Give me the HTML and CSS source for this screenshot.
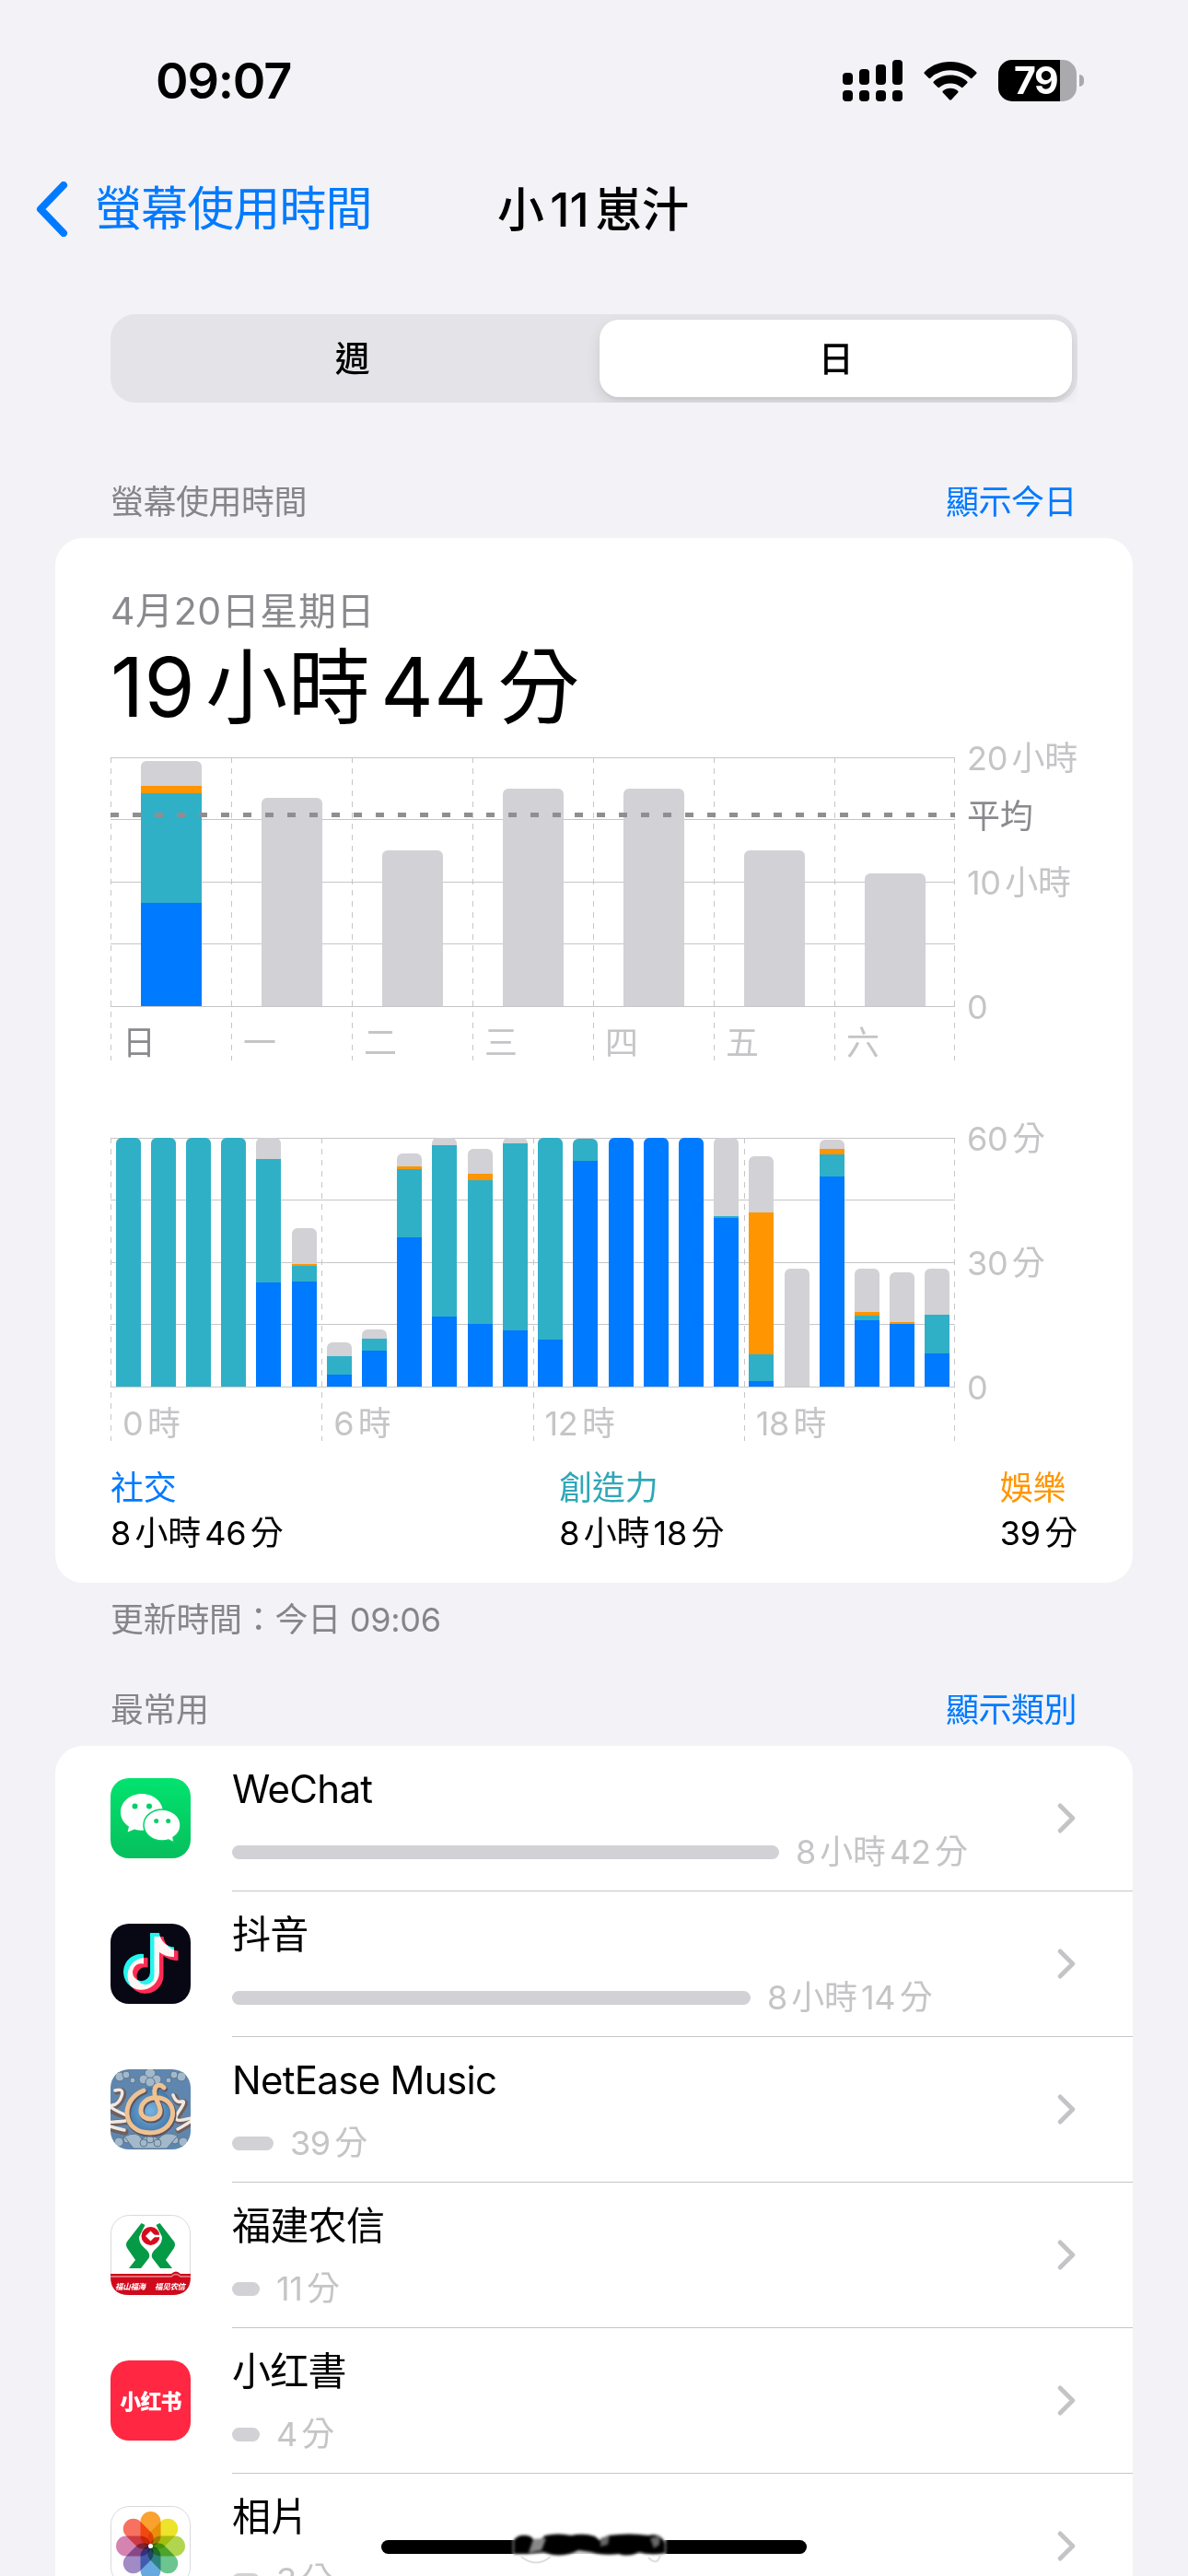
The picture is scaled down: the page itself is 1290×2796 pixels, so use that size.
FILE: index.html
```html
<!DOCTYPE html>
<html lang="zh-Hant">
<head>
    <meta charset="UTF-8">
    <meta name="viewport" content="width=device-width, initial-scale=1.0">
    <title>螢幕使用時間</title>
    <link rel="stylesheet" href="styles.css">
</head>
<body>
    <header class="status-bar">
        <span class="clock">09:07</span>
        <div class="status-icons">
            <svg class="signal" width="66" height="46" viewBox="0 0 66 46">
                <rect x="0" y="14" width="11" height="13" rx="4"/>
                <rect x="18" y="10" width="11" height="17" rx="4"/>
                <rect x="36" y="5" width="11" height="22" rx="4"/>
                <rect x="54" y="0" width="11" height="27" rx="4"/>
                <rect x="0" y="33" width="11" height="12" rx="4"/>
                <rect x="18" y="33" width="11" height="12" rx="4"/>
                <rect x="36" y="33" width="11" height="12" rx="4"/>
                <rect x="54" y="33" width="11" height="12" rx="4"/>
            </svg>
            <svg class="wifi" width="58" height="44" viewBox="0 0 58 44">
                <path d="M29 1C18 1 8 5 .8 12.200Q0 13 .8 14L5.500 18.800Q6.400 19.600 7.300 18.700C13 13.300 20.600 10.200 29 10.200S45 13.300 50.700 18.700Q51.600 19.600 52.500 18.800L57.200 14Q58 13 57.200 12.200C50 5 40 1 29 1Z"/>
                <path d="M29 15.500C22 15.500 15.600 18 10.800 22.400Q10 23.300 10.800 24.200L15.400 28.800Q16.300 29.600 17.200 28.800C20.400 26 24.500 24.500 29 24.500S37.600 26 40.800 28.800Q41.700 29.600 42.600 28.800L47.200 24.200Q48 23.300 47.200 22.400C42.400 18 36 15.500 29 15.500Z"/>
                <path d="M29 29.800C25.800 29.800 23 31 20.800 32.800Q20 33.700 20.800 34.600L28 42.300Q29 43.200 30 42.300L37.200 34.600Q38 33.700 37.200 32.800C35 31 32.200 29.800 29 29.800Z"/>
            </svg>
            <div class="battery"><span>79</span></div>
        </div>
    </header>

    <nav class="nav-bar">
        <a class="back">
            <svg width="36" height="60" viewBox="0 0 36 60"><path d="M31 4L6 30L31 56"/></svg>
            <span>螢幕使用時間</span>
        </a>
        <h1 class="nav-title">小11崽汁</h1>
    </nav>

    <main>
        <div class="segmented">
            <div class="segment">週</div>
            <div class="segment active">日</div>
        </div>

        <div class="section-head usage-head">
            <span>螢幕使用時間</span>
            <a>顯示今日</a>
        </div>

        <section class="card usage">
            <div class="date">4月20日星期日</div>
            <div class="total">19小時44分</div>

            <div class="chart week">
                <div class="plot" id="week-plot"></div>
                <div class="axis">
                    <span>20小時</span>
                    <span>10小時</span>
                    <span>0</span>
                    <span class="average-label">平均</span>
                </div>
                <div class="average-line"></div>
            </div>

            <div class="chart day">
                <div class="plot" id="day-plot"></div>
                <div class="axis">
                    <span>60分</span>
                    <span>30分</span>
                    <span>0</span>
                </div>
            </div>

            <div class="legend">
                <div><div class="social-text">社交</div><div>8小時46分</div></div>
                <div><div class="creative-text">創造力</div><div>8小時18分</div></div>
                <div><div class="fun-text">娛樂</div><div>39分</div></div>
            </div>
        </section>

        <p class="updated">更新時間：今日 09:06</p>

        <div class="section-head apps-head">
            <span>最常用</span>
            <a>顯示類別</a>
        </div>

        <section class="card apps">
            <div class="app">
                <svg class="icon" viewBox="0 0 87 87">
                    <defs>
                        <linearGradient id="wechat" x1="0" y1="0" x2="0" y2="1">
                            <stop offset="0" stop-color="#02e36f"/>
                            <stop offset="1" stop-color="#06bf5c"/>
                        </linearGradient>
                    </defs>
                    <rect width="87" height="87" rx="20" fill="url(#wechat)"/>
                    <path d="M34 17C21 17 11 26 11 37C11 43.500 14.500 49 20 52.600L18.600 58.500L26 55.500Q30 56.700 34 56.700C47 56.700 57 48 57 37S47 17 34 17Z" fill="#fff"/>
                    <path d="M56 34C45 34 36 41.500 36 51S45 68 56 68Q60 68 63 67L69 70L68 64.500C73 61.500 76 56.500 76 51C76 41.500 67 34 56 34Z" fill="#fff" stroke="#04d066" stroke-width="1.500"/>
                    <g fill="#05cf66">
                        <circle cx="26.500" cy="30.500" r="3"/><circle cx="42" cy="30.500" r="3"/>
                        <circle cx="49.700" cy="46.500" r="2.500"/><circle cx="62.700" cy="46.500" r="2.500"/>
                    </g>
                </svg>
                <div class="app-info">
                    <div class="app-name">WeChat</div>
                    <div class="app-time"><i style="width: 594px"></i><span>8小時42分</span></div>
                </div>
                <svg class="chevron" viewBox="0 0 20 34"><path d="M3 3L17 17L3 31"/></svg>
            </div>

            <div class="app">
                <svg class="icon" viewBox="0 0 87 87">
                    <rect width="87" height="87" rx="20" fill="#080814"/>
                    <g class="note">
                        <path d="M43 10H53C54 18 60 25 69 25.500V36C63 36 57 34 53 31V53A19.500 19.500 0 1 1 36 33V43.500A9.500 9.500 0 1 0 43 53Z" fill="#25f4ee"/>
                        <path d="M43 10H53C54 18 60 25 69 25.500V36C63 36 57 34 53 31V53A19.500 19.500 0 1 1 36 33V43.500A9.500 9.500 0 1 0 43 53Z" fill="#fe2c55" transform="translate(4.500 4)"/>
                    </g>
                </svg>
                <div class="app-info">
                    <div class="app-name" lang="zh-Hans">抖音</div>
                    <div class="app-time"><i style="width: 563px"></i><span>8小時14分</span></div>
                </div>
                <svg class="chevron" viewBox="0 0 20 34"><path d="M3 3L17 17L3 31"/></svg>
            </div>

            <div class="app">
                <svg class="icon" viewBox="0 0 87 87">
                    <defs>
                        <clipPath id="tile"><rect width="87" height="87" rx="20"/></clipPath>
                        <radialGradient id="disc"><stop offset="0" stop-color="#76b4e0"/><stop offset="1" stop-color="#4478ac"/></radialGradient>
                    </defs>
                    <g clip-path="url(#tile)">
                        <rect width="87" height="87" fill="#5f86ae"/>
                        <!-- clouds -->
                        <g fill="#a3b9ca" stroke="#5a7690" stroke-width="1">
                            <circle cx="43" cy="5" r="6"/><circle cx="36" cy="11" r="5"/><circle cx="50" cy="11" r="5"/><circle cx="43" cy="14" r="5"/>
                            <circle cx="10" cy="8" r="5"/><circle cx="17" cy="6" r="4"/><circle cx="24" cy="12" r="3"/>
                            <circle cx="77" cy="8" r="5"/><circle cx="69" cy="6" r="4"/><circle cx="63" cy="12" r="3"/>
                            <circle cx="9" cy="79" r="5"/><circle cx="18" cy="76" r="4"/><circle cx="70" cy="77" r="4"/><circle cx="79" cy="79" r="5"/>
                            <path d="M15 73Q30 66 34 76Q43 68 52 76Q58 66 73 72L61 86H25Z"/>
                            <circle cx="36" cy="80" r="4"/><circle cx="43" cy="76" r="4"/><circle cx="51" cy="80" r="4"/>
                        </g>
                        <!-- dragons -->
                        <g fill="none" stroke="#705f5c" stroke-linecap="round" stroke-width="7">
                            <path d="M7 24Q16 22 13 30T3 41T14 50T6 58T16 68"/>
                            <path d="M70 30Q72 38 78 36T75 47T84 55T74 66"/>
                        </g>
                        <g fill="none" stroke="#eee9e5" stroke-linecap="round" stroke-width="3.500">
                            <path d="M5 23Q15 20 12 29T2 39T13 48T5 57T15 66"/>
                            <path d="M68 28Q71 37 77 35T74 46T83 54T73 65"/>
                        </g>
                        <circle cx="43" cy="45" r="25" fill="url(#disc)"/>
                        <g fill="none" stroke-linecap="round">
                            <path d="M36 23C10 33 12 69 43 69C71 69 76 35 53 31C41 29 33 36 33 45C33 57 54 57 54 45C54 37 46 31 48 22C49 16 55 16 58 20" stroke="#5b5560" stroke-width="6" transform="translate(1 1.500)"/>
                            <path d="M36 23C10 33 12 69 43 69C71 69 76 35 53 31C41 29 33 36 33 45C33 57 54 57 54 45C54 37 46 31 48 22C49 16 55 16 58 20" stroke="#efc292" stroke-width="5"/>
                        </g>
                    </g>
                </svg>
                <div class="app-info">
                    <div class="app-name">NetEase Music</div>
                    <div class="app-time"><i style="width: 45px"></i><span>39分</span></div>
                </div>
                <svg class="chevron" viewBox="0 0 20 34"><path d="M3 3L17 17L3 31"/></svg>
            </div>

            <div class="app">
                <svg class="icon" viewBox="0 0 87 87">
                    <rect x=".5" y=".5" width="86" height="86" rx="20" fill="#fff" stroke="#d9d9dc"/>
                    <path d="M0 64H66Q71 59 76 64H87V67Q87 87 67 87H20Q0 87 0 67Z" fill="#cf0a1c"/>
                    <path d="M0 67H66Q71 62 76 67H87" fill="none" stroke="#e98a8f" stroke-width="1.500"/>
                    <g fill="#059a45">
                        <path d="M33.500 9L37.500 11L31 24C31 32 36 35 40 39C43 43 43 46 40 49L33 58H20L27 49L18 36Q16 32 18 29Z"/>
                        <path d="M53.500 9L49.500 11L56 24C56 32 51 35 47 39C44 43 44 46 47 49L54 58H67L60 49L69 36Q71 32 69 29Z"/>
                    </g>
                    <circle cx="43.500" cy="23" r="10" fill="#d70a1e"/>
                    <path d="M43.500 17.500L49 23L43.500 28.500L38 23Z" fill="#fff"/>
                    <path d="M46 23H54" stroke="#fff" stroke-width="2.500"/>
                    <text x="5" y="80.500" class="slogan">福山福海</text>
                    <text x="48" y="80.500" class="slogan">福见农信</text>
                </svg>
                <div class="app-info">
                    <div class="app-name" lang="zh-Hans">福建农信</div>
                    <div class="app-time"><i style="width: 30px"></i><span>11分</span></div>
                </div>
                <svg class="chevron" viewBox="0 0 20 34"><path d="M3 3L17 17L3 31"/></svg>
            </div>

            <div class="app">
                <svg class="icon" viewBox="0 0 87 87">
                    <rect width="87" height="87" rx="20" fill="#ff2741"/>
                    <text x="43.500" y="53" class="red-logo">小红书</text>
                </svg>
                <div class="app-info">
                    <div class="app-name" lang="zh-Hans">小红書</div>
                    <div class="app-time"><i style="width: 30px"></i><span>4分</span></div>
                </div>
                <svg class="chevron" viewBox="0 0 20 34"><path d="M3 3L17 17L3 31"/></svg>
            </div>

            <div class="app">
                <svg class="icon" viewBox="0 0 87 87">
                    <rect x=".5" y=".5" width="86" height="86" rx="20" fill="#fff" stroke="#d9d9dc"/>
                    <g class="petals">
                        <rect x="32.500" y="6" width="22" height="37.500" rx="11" fill="#f9a22f"/>
                        <rect x="32.500" y="6" width="22" height="37.500" rx="11" fill="#ece32a" transform="rotate(45 43.500 43.500)"/>
                        <rect x="32.500" y="6" width="22" height="37.500" rx="11" fill="#b2d550" transform="rotate(90 43.500 43.500)"/>
                        <rect x="32.500" y="6" width="22" height="37.500" rx="11" fill="#6cc58e" transform="rotate(135 43.500 43.500)"/>
                        <rect x="32.500" y="6" width="22" height="37.500" rx="11" fill="#68a9e0" transform="rotate(180 43.500 43.500)"/>
                        <rect x="32.500" y="6" width="22" height="37.500" rx="11" fill="#a08bc6" transform="rotate(225 43.500 43.500)"/>
                        <rect x="32.500" y="6" width="22" height="37.500" rx="11" fill="#d583b0" transform="rotate(270 43.500 43.500)"/>
                        <rect x="32.500" y="6" width="22" height="37.500" rx="11" fill="#f77160" transform="rotate(315 43.500 43.500)"/>
                    </g>
                    <circle cx="43.500" cy="43.500" r="2.500" fill="#fff"/>
                </svg>
                <div class="app-info">
                    <div class="app-name">相片</div>
                    <div class="app-time"><i style="width: 30px"></i><span>3分</span></div>
                </div>
                <svg class="chevron" viewBox="0 0 20 34"><path d="M3 3L17 17L3 31"/></svg>
            </div>
        </section>
    </main>

    <svg class="home-indicator" width="462" height="50" viewBox="0 0 462 50">
        <rect x="0" y="17" width="462" height="15" rx="7.500"/>
        <g class="smudge">
            <rect x="143" y="4" width="166" height="36" fill="#fff" opacity=".8"/>
            <path d="M144 17Q150 9 162 13L169 20L178 12Q192 9 206 12Q220 9 232 13L238 18L246 12Q270 9 290 12Q303 9 308 20V31Q292 34 280 30Q268 36 258 32Q240 34 228 30L214 28Q202 35 186 33L176 30L160 32L144 32Z"/>
            <path d="M165 16L179 15L174 28L160 31Z" fill="#888"/>
            <path d="M238 15L248 12L246 22L238 24ZM292 15L303 12L302 22L296 26Z" fill="#666"/>
        </g>
        <path d="M152 35Q168 48 184 35M290 36Q300 46 303 33" fill="none" stroke="#ddd" stroke-width="2"/>
    </svg>

    <script>
        // bar heights in px: [social, creativity, entertainment, other]
        const week = [
            { label: "日", bar: [112, 119, 8, 27] },
            { label: "一", bar: [0, 0, 0, 226] },
            { label: "二", bar: [0, 0, 0, 169] },
            { label: "三", bar: [0, 0, 0, 236] },
            { label: "四", bar: [0, 0, 0, 236] },
            { label: "五", bar: [0, 0, 0, 169] },
            { label: "六", bar: [0, 0, 0, 144] },
        ];
        const day = [
            [0, 270, 0, 0], [0, 270, 0, 0], [0, 270, 0, 0], [0, 270, 0, 0],
            [113, 134, 0, 23], [114, 17.5, 1.5, 39], [13, 20, 0, 15], [39, 13, 0, 10],
            [162, 74, 3, 14], [76, 186, 0, 8], [68, 156, 7, 27], [61, 203, 0, 6],
            [51, 219, 0, 0], [245, 24, 0, 0], [270, 0, 0, 0], [270, 0, 0, 0],
            [270, 0, 0, 0], [183, 2, 0, 85], [6, 29, 154, 61], [0, 0, 0, 128],
            [228, 24, 6, 10], [72, 5, 4, 47], [68, 0, 2, 54], [36, 42, 0, 50],
        ];
        const names = ["social", "creative", "fun", "other"];

        function makeBar(values) {
            const parts = values.map((v, i) => v ? `<i class="${names[i]}" style="height: ${v}px"></i>` : "");
            return `<div class="bar">${parts.join("")}</div>`;
        }

        document.getElementById("week-plot").innerHTML = week.map(d =>
            `<div class="column"><div class="bars">${makeBar(d.bar)}</div><span class="tick">${d.label}</span></div>`
        ).join("");

        // the day is split into four blocks of six hours
        let blocks = "";
        for (let h = 0; h < 24; h += 6) {
            blocks += `<div class="column"><div class="bars">${day.slice(h, h + 6).map(makeBar).join("")}</div><span class="tick">${h}時</span></div>`;
        }
        document.getElementById("day-plot").innerHTML = blocks;
    </script>
</body>
</html>
```
FILE: styles.css
```css
* {
    box-sizing: border-box;
}

body {
    margin: 0;
    width: 1290px;
    height: 2796px;
    overflow: hidden;
    background: #f2f2f7;
    color: #000;
    font-family: Inter, "Noto Sans CJK TC", sans-serif;
    font-size: 36px;
    line-height: 48px;
    letter-spacing: -0.3px;
    text-autospace: normal;
}

[lang="zh-Hans"] {
    font-family: Inter, "Noto Sans CJK SC", sans-serif;
}

/* status bar */
.status-bar {
    display: flex;
    justify-content: space-between;
    align-items: center;
    height: 174px;
    padding: 1px 121px 0 169px;
}

.clock {
    font-size: 54px;
    font-weight: 600;
    letter-spacing: -1.2px;
}

.status-icons {
    display: flex;
    align-items: center;
    gap: 22px;
}

.battery {
    position: relative;
    width: 85px;
    height: 45px;
    border-radius: 15px;
    background: linear-gradient(90deg, #000 67px, #a9a9ae 67px);
    color: #fff;
    font-size: 41px;
    font-weight: 700;
    line-height: 45px;
    letter-spacing: -1.5px;
    padding-left: 17px;
}

.battery::after {
    content: "";
    position: absolute;
    right: -8px;
    top: 16px;
    width: 5px;
    height: 13px;
    border-radius: 0 6px 6px 0;
    background: #a9a9ae;
}

.wifi {
    margin-right: 1px;
}

/* navigation */
.nav-bar {
    display: grid;
    grid-template-columns: 1fr auto 1fr;
    align-items: center;
    height: 106px;
    padding: 0 40px 0 38px;
}

.back {
    display: flex;
    align-items: center;
    gap: 29px;
    color: #007aff;
    font-size: 51px;
    letter-spacing: -0.9px;
    white-space: nowrap;
}

.back path {
    fill: none;
    stroke: #007aff;
    stroke-width: 8;
    stroke-linecap: round;
    stroke-linejoin: round;
}

.nav-title {
    margin: 2px 0 0;
    font-size: 51px;
    font-weight: 500;
    letter-spacing: 0;
}

main {
    padding: 61px 60px 0;
}

.segmented {
    display: flex;
    height: 96px;
    margin: 0 60px;
    padding: 6px;
    border-radius: 27px;
    background: #e3e3e8;
}

.segment {
    flex: 1;
    padding-right: 12px;
    line-height: 84px;
    text-align: center;
    font-size: 38px;
    font-weight: 500;
}

.segment.active {
    flex: 0 0 513px;
    padding-right: 0;
    border-radius: 21px;
    background: #fff;
    box-shadow: 0 6px 16px rgba(0, 0, 0, 0.1), 0 3px 3px rgba(0, 0, 0, 0.04);
    clip-path: inset(-6px -6px -6px -30px);
}

.section-head {
    display: flex;
    justify-content: space-between;
    padding: 0 61px 0 60px;
    color: #85858a;
    letter-spacing: -0.5px;
}

.section-head a {
    color: #007aff;
}

.usage-head {
    margin-top: 84px;
}

.card {
    border-radius: 30px;
    background: #fff;
}

/* usage card */
.usage {
    height: 1134px;
    margin-top: 15px;
    padding: 54px 60px 0;
}

.date {
    color: #8a8a8e;
    font-size: 41px;
    line-height: 50px;
    letter-spacing: 0.6px;
    text-autospace: no-autospace;
}

.total {
    padding-top: 4px;
    font-size: 89px;
    line-height: 108px;
    letter-spacing: 0.4px;
}

.chart {
    position: relative;
    display: flex;
    height: 329px;
}

.week {
    margin-top: 22px;
}

.day {
    margin-top: 84px;
}

.plot {
    display: flex;
    width: 917px;
    background:
        repeating-linear-gradient(#c6c6c8 0 6px, transparent 6px 12px) right / 1px 100% no-repeat,
        linear-gradient(#c6c6c8, #c6c6c8) 0 0 / 100% 1px no-repeat,
        linear-gradient(#c6c6c8, #c6c6c8) 0 67px / 100% 1px no-repeat,
        linear-gradient(#c6c6c8, #c6c6c8) 0 135px / 100% 1px no-repeat,
        linear-gradient(#c6c6c8, #c6c6c8) 0 202px / 100% 1px no-repeat,
        linear-gradient(#c6c6c8, #c6c6c8) 0 270px / 100% 1px no-repeat;
}

.column {
    flex: 1;
    background: repeating-linear-gradient(#c6c6c8 0 6px, transparent 6px 12px) left / 1px 100% no-repeat;
}

.bars {
    display: flex;
    align-items: flex-end;
    justify-content: space-around;
    height: 270px;
}

.bar {
    display: flex;
    flex-direction: column-reverse;
    width: 27px;
    border-radius: 6px 6px 0 0;
    overflow: hidden;
}

.week .bars {
    padding-left: 1px;
}

.week .bar {
    width: 66px;
}

.social {
    background: #007aff;
}

.creative {
    background: #30b0c7;
}

.fun {
    background: #ff9500;
}

.other {
    background: #d1d1d6;
}

.tick {
    display: block;
    margin-top: 16px;
    padding-left: 13px;
    color: #c5c5c7;
}

.week .column:first-child .tick {
    color: #8a8a8e;
}

.axis {
    display: flex;
    flex-direction: column;
    justify-content: space-between;
    height: 318px;
    margin-top: -23px;
    padding-left: 13px;
    color: #c5c5c7;
    white-space: nowrap;
}

.average-label {
    position: absolute;
    top: 40px;
    color: #8a8a8e;
}

.average-line {
    position: absolute;
    left: 0;
    top: 60px;
    width: 917px;
    height: 5px;
    background: repeating-linear-gradient(90deg, #8e8e93 0 9px, transparent 9px 24px);
}

.legend {
    display: flex;
    justify-content: space-between;
    margin-top: 27px;
    line-height: 49px;
}

.social-text {
    color: #007aff;
}

.creative-text {
    color: #30a7b8;
}

.fun-text {
    color: #ff9500;
}

.updated {
    margin: 16px 60px 0;
    color: #85858a;
}

.apps-head {
    margin-top: 50px;
}

/* app list */
.apps {
    margin-top: 15px;
    padding-left: 60px;
}

.app {
    display: flex;
    align-items: flex-start;
    height: 158px;
}

.icon {
    flex: none;
    width: 87px;
    height: 87px;
    margin: 35px 45px 0 0;
}

.app-info {
    flex: 1;
    height: 158px;
    padding-top: 22px;
    border-bottom: 1px solid #c6c6c8;
}

.app-name {
    font-size: 42px;
    line-height: 50px;
    letter-spacing: -0.7px;
}

.app-time {
    display: flex;
    align-items: center;
    gap: 18px;
    height: 48px;
    margin-top: 19px;
    color: #c5c5c7;
    letter-spacing: -0.4px;
}

.app-time i {
    height: 15px;
    border-radius: 8px;
    background: #d1d1d6;
}

.chevron {
    width: 82px;
    height: 158px;
    padding: 62px 62px 62px 0;
    border-bottom: 1px solid #c6c6c8;
    fill: none;
    stroke: #c4c4c7;
    stroke-width: 5;
    stroke-linecap: round;
    stroke-linejoin: round;
}

.note {
    isolation: isolate;
}

.note path {
    mix-blend-mode: screen;
}

.petals {
    isolation: isolate;
}

.petals rect {
    mix-blend-mode: multiply;
}

.slogan {
    fill: #fff;
    font-size: 8.5px;
    font-weight: 700;
    font-style: italic;
    font-family: "Noto Sans CJK SC", sans-serif;
}

.red-logo {
    fill: #fff;
    font-size: 23px;
    font-weight: 900;
    letter-spacing: -0.8px;
    text-anchor: middle;
    font-family: "Noto Sans CJK SC", sans-serif;
}

.home-indicator {
    position: absolute;
    left: 414px;
    top: 2740px;
}

.smudge {
    filter: blur(1.5px);
}
```
